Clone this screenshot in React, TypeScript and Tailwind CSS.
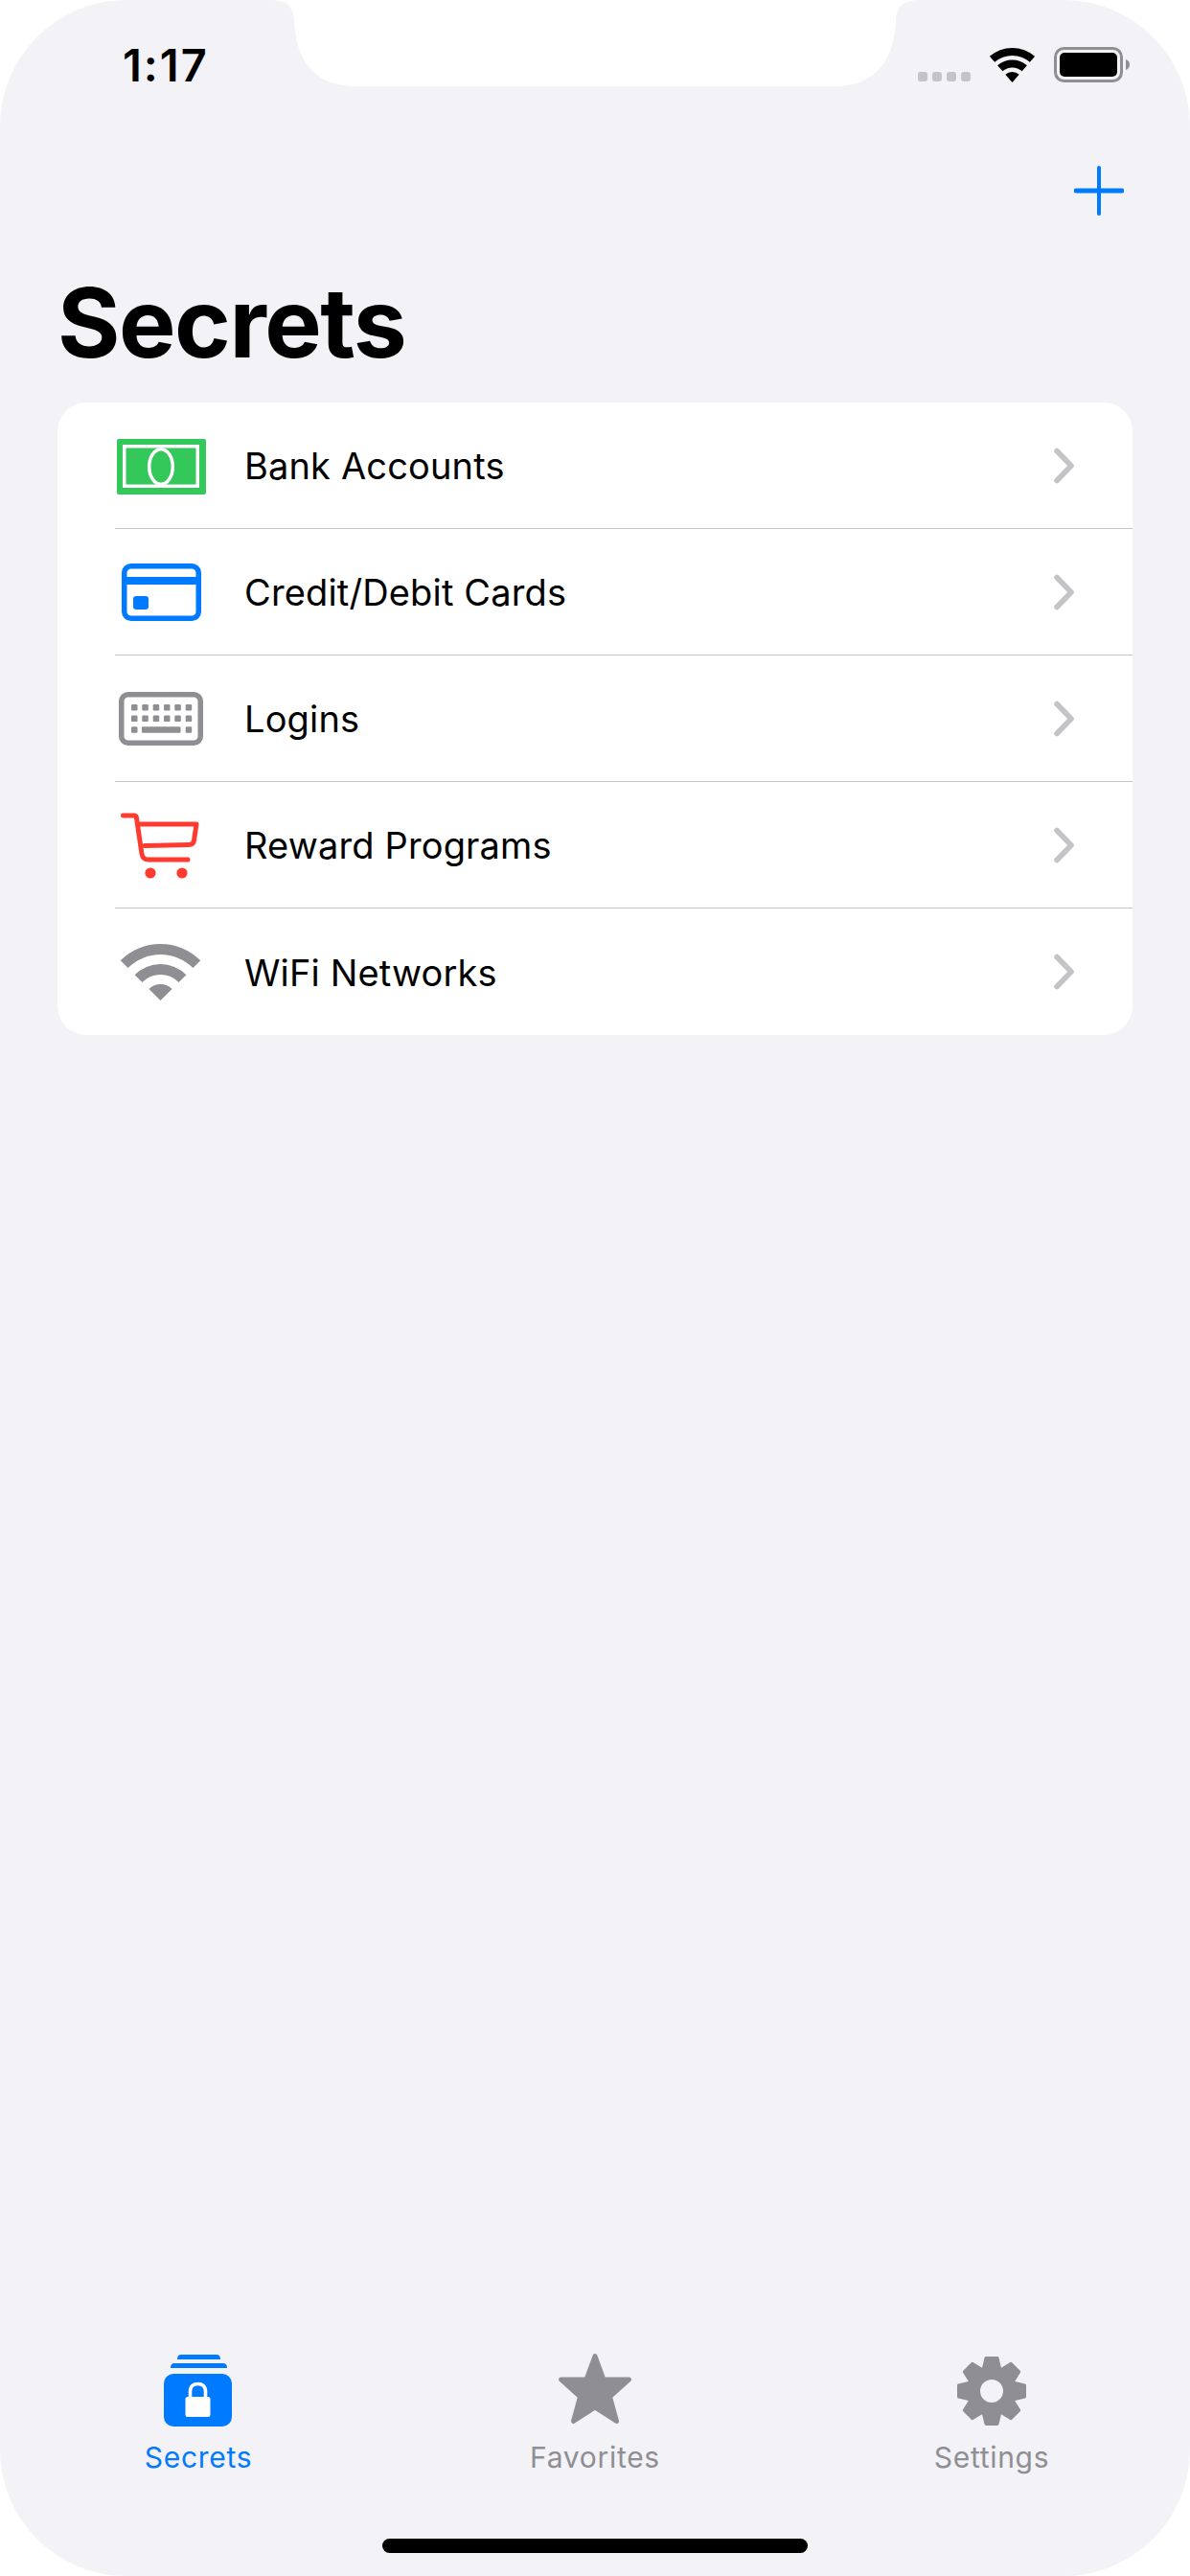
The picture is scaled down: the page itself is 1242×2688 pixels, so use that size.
import React from 'react';

// band of the wifi fan: a ring segment around the apex at (cx, cy)
const fanBand = (cx: number, cy: number, outer: number, inner: number, deg: number) => {
  const a = (deg * Math.PI) / 180;
  const sx = Math.sin(a);
  const cyy = Math.cos(a);
  return `M${cx - outer * sx} ${cy - outer * cyy}A${outer} ${outer} 0 0 1 ${cx + outer * sx} ${cy - outer * cyy}L${cx + inner * sx} ${cy - inner * cyy}A${inner} ${inner} 0 0 0 ${cx - inner * sx} ${cy - inner * cyy}Z`;
};

const fanTip = (cx: number, cy: number, r: number, deg: number) => {
  const a = (deg * Math.PI) / 180;
  return `M${cx} ${cy}L${cx - r * Math.sin(a)} ${cy - r * Math.cos(a)}A${r} ${r} 0 0 1 ${cx + r * Math.sin(a)} ${cy - r * Math.cos(a)}Z`;
};

const BankIcon = () => (
  <svg viewBox="0 0 94 80" className="w-[94px] h-[80px] overflow-visible">
    <rect x="2" y="12" width="93" height="58" rx="2" fill="#34c759" />
    <rect x="9.75" y="19.75" width="76.5" height="41.5" fill="none" stroke="#fff" strokeWidth="3.5" />
    <ellipse cx="48" cy="41" rx="12.3" ry="18.3" fill="none" stroke="#fff" strokeWidth="3.5" />
  </svg>
);

const CardIcon = () => (
  <svg viewBox="0 0 94 80" className="w-[94px] h-[80px] overflow-visible">
    <rect x="9.75" y="12.75" width="77.5" height="54.5" rx="7" fill="none" stroke="#007aff" strokeWidth="5.5" />
    <rect x="8" y="24" width="80" height="8" fill="#007aff" />
    <rect x="19" y="44" width="16" height="14" rx="3" fill="#007aff" />
  </svg>
);

const keyColumns = [17, 28.3, 39.7, 51, 62.3, 73.7];

const KeyboardIcon = () => (
  <svg viewBox="0 0 94 80" className="w-[94px] h-[80px] overflow-visible">
    <rect x="6.75" y="14.75" width="82.5" height="50.5" rx="7" fill="none" stroke="#8e8e93" strokeWidth="5.5" />
    {keyColumns.map((x) => (
      <g key={x} fill="#8e8e93">
        <rect x={x} y="25" width="6.5" height="6.5" rx="1.2" />
        <rect x={x} y="36.6" width="6.5" height="6.5" rx="1.2" />
      </g>
    ))}
    <rect x="17" y="48.3" width="6.5" height="6.5" rx="1.2" fill="#8e8e93" />
    <rect x="28" y="48.3" width="40.5" height="6.5" rx="1.2" fill="#8e8e93" />
    <rect x="73.7" y="48.3" width="6.5" height="6.5" rx="1.2" fill="#8e8e93" />
  </svg>
);

const CartIcon = () => (
  <svg viewBox="0 0 94 80" className="w-[94px] h-[80px] overflow-visible">
    <path
      d="M8.5 9H20Q22 9 22.4 11L28 49Q29 55 35 55H76M23.5 18H85L82.5 35Q82 39.5 77 39.5L31 40.5"
      fill="none"
      stroke="#ff3b30"
      strokeWidth="5"
      strokeLinecap="round"
      strokeLinejoin="round"
    />
    <circle cx="37" cy="69" r="5.6" fill="#ff3b30" />
    <circle cx="70" cy="69" r="5.6" fill="#ff3b30" />
  </svg>
);

const WifiIcon = () => (
  <svg viewBox="0 0 94 80" className="w-[94px] h-[80px] overflow-visible">
    <path
      d={`${fanBand(47.5, 70, 59, 48, 45)}${fanBand(47.5, 70, 38, 27, 45)}${fanTip(47.5, 70, 17, 45)}`}
      fill="#8e8e93"
    />
  </svg>
);

const Chevron = () => (
  <svg viewBox="0 0 24 40" className="w-[24px] h-[40px] overflow-visible">
    <path d="M4 4.5L19 20L4 35.5" fill="none" stroke="#c4c4c7" strokeWidth="5.6" strokeLinecap="round" strokeLinejoin="round" />
  </svg>
);

const SecretsIcon = () => (
  <svg viewBox="0 0 80 80" className="w-[80px] h-[80px] overflow-visible">
    <path d="M18 7Q18 2 22 2H59Q63 2 63 7Z" fill="#007aff" />
    <path d="M11 16Q11 11 15 11H66Q70 11 70 16Z" fill="#007aff" />
    <rect x="4" y="22" width="71" height="55" rx="10" fill="#007aff" />
    <rect x="26.5" y="46" width="26" height="21" rx="2.5" fill="#fff" />
    <path d="M31.5 47V40.5C31.5 35 35 32.5 39.5 32.5C44 32.5 47.5 35 47.5 40.5V47" fill="none" stroke="#fff" strokeWidth="3.6" />
  </svg>
);

const StarIcon = () => (
  <svg viewBox="0 0 80 80" className="w-[80px] h-[80px] overflow-visible">
    <path
      d="M40 3.5L49 28H75.5L55.5 46L62.5 71.5L40 57L17.5 71.5L24.5 46L4.5 28H31Z"
      fill="#8e8e93"
      stroke="#8e8e93"
      strokeWidth="5"
      strokeLinejoin="round"
    />
  </svg>
);

const gearTeeth = [0, 45, 90, 135, 180, 225, 270, 315];

const GearIcon = () => (
  <svg viewBox="0 0 80 80" className="w-[80px] h-[80px] overflow-visible">
    <g fill="#8e8e93">
      {gearTeeth.map((deg) => (
        <path
          key={deg}
          d="M31 18L34 5.5H46L49 18Z"
          stroke="#8e8e93"
          strokeWidth="3"
          strokeLinejoin="round"
          transform={`rotate(${deg} 40 40)`}
        />
      ))}
      <path fillRule="evenodd" d="M40 14a26 26 0 1 0 0 52a26 26 0 1 0 0-52ZM40 28a12 12 0 1 1 0 24a12 12 0 1 1 0-24Z" />
    </g>
  </svg>
);

const Notch = () => (
  <svg viewBox="0 0 680 90" className="absolute left-[281px] top-0 w-[680px] h-[90px]">
    <path
      d="M0 0H680C664 0 655 4 654 22C652 62 634 90 590 90H90C46 90 28 62 26 22C25 4 16 0 0 0Z"
      fill="#fff"
    />
  </svg>
);

const rows = [
  { label: 'Bank Accounts', icon: <BankIcon /> },
  { label: 'Credit/Debit Cards', icon: <CardIcon /> },
  { label: 'Logins', icon: <KeyboardIcon /> },
  { label: 'Reward Programs', icon: <CartIcon /> },
  { label: 'WiFi Networks', icon: <WifiIcon /> },
];

const tabs = [
  { label: 'Secrets', icon: <SecretsIcon />, active: true },
  { label: 'Favorites', icon: <StarIcon />, active: false },
  { label: 'Settings', icon: <GearIcon />, active: false },
];

export default function App() {
  return (
    <div className="w-[1242px] h-[2688px] bg-white font-['Inter',sans-serif] text-black">
      <div className="relative w-full h-full rounded-[132px] bg-[#f2f2f7] flex flex-col overflow-hidden">
        <Notch />

        <div className="h-[140px] flex items-start justify-between pl-[128px] pr-[62px] pt-[40px]">
          <span className="text-[47px] leading-[56px] font-semibold tracking-[2px]">1:17</span>
          <div className="flex items-end gap-[20px] pt-[9px]">
            <div className="flex gap-[5px] pb-[1px]">
              <span className="w-[10px] h-[10px] rounded-[3px] bg-[#c4c4c7]" />
              <span className="w-[10px] h-[10px] rounded-[3px] bg-[#c4c4c7]" />
              <span className="w-[10px] h-[10px] rounded-[3px] bg-[#c4c4c7]" />
              <span className="w-[10px] h-[10px] rounded-[3px] bg-[#c4c4c7]" />
            </div>
            <svg viewBox="0 0 47 36" className="w-[47px] h-[36px] overflow-visible">
              <path d={`${fanBand(23.5, 36, 36, 28, 41)}${fanBand(23.5, 36, 23.5, 15.5, 41)}${fanTip(23.5, 36, 11, 41)}`} fill="#000" />
            </svg>
            <svg viewBox="0 0 80 37" className="w-[80px] h-[37px] overflow-visible">
              <rect x="1.5" y="1.5" width="69" height="34" rx="9" fill="none" stroke="#8e8e93" strokeWidth="3" />
              <rect x="6" y="6" width="60" height="25" rx="5" fill="#000" />
              <path d="M75 13C78 14 79 16 79 18.5C79 21 78 23 75 24Z" fill="#8e8e93" />
            </svg>
          </div>
        </div>

        <div className="h-[118px] flex items-center justify-end pr-[69px]">
          <svg viewBox="0 0 52 52" className="w-[52px] h-[52px]">
            <path d="M26 2V50" stroke="#007aff" strokeWidth="4" strokeLinecap="round" />
            <path d="M2 26H50" stroke="#007aff" strokeWidth="5" strokeLinecap="round" />
          </svg>
        </div>

        <h1 className="h-[162px] pl-[60px] pt-[17px] text-[100px] leading-[124px] font-bold tracking-[-1.5px]">Secrets</h1>

        <div className="mx-[60px] rounded-[30px] bg-white overflow-hidden">
          {rows.map((row, i) => (
            <div key={row.label} className="h-[132px] pl-[60px]">
              <div className={`h-full flex items-center ${i < rows.length - 1 ? 'border-b border-[#c6c6c8]' : ''}`}>
                {row.icon}
                <span className="ml-[41px] flex-1 pt-[2px] text-[38px] tracking-[0.15px]">{row.label}</span>
                <div className="mr-[59px] flex">
                  <Chevron />
                </div>
              </div>
            </div>
          ))}
        </div>

        <div className="mt-auto grid grid-cols-3">
          {tabs.map((tab) => (
            <div key={tab.label} className="flex flex-col items-center">
              {tab.icon}
              <span className={`mt-[9px] text-[30px] leading-[40px] tracking-[0.7px] ${tab.active ? 'text-[#007aff]' : 'text-[#8e8e93]'}`}>
                {tab.label}
              </span>
            </div>
          ))}
        </div>

        <div className="mt-[65px] mb-[24px] mx-auto w-[444px] h-[15px] rounded-full bg-black" />
      </div>
    </div>
  );
}
